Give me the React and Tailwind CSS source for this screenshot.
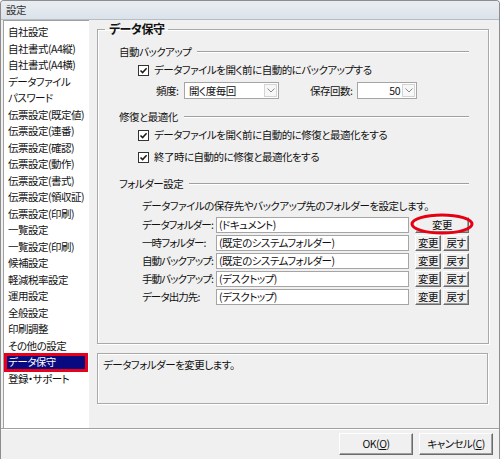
const items = [
  '自社設定',
  '自社書式(A4縦)',
  '自社書式(A4横)',
  'データファイル',
  'パスワード',
  '伝票設定(既定値)',
  '伝票設定(連番)',
  '伝票設定(確認)',
  '伝票設定(動作)',
  '伝票設定(書式)',
  '伝票設定(領収証)',
  '伝票設定(印刷)',
  '一覧設定',
  '一覧設定(印刷)',
  '候補設定',
  '軽減税率設定',
  '運用設定',
  '全般設定',
  '印刷調整',
  'その他の設定',
  'データ保守',
  '登録・サポート',
];

const folders = [
  { label: 'データフォルダー:', value: '(ドキュメント)', wide: true },
  { label: '一時フォルダー:', value: '(既定のシステムフォルダー)' },
  { label: '自動バックアップ:', value: '(既定のシステムフォルダー)' },
  { label: '手動バックアップ:', value: '(デスクトップ)' },
  { label: 'データ出力先:', value: '(デスクトップ)' },
];

function SectionHead({ children }) {
  return (
    <div className="flex items-center h-4 gap-[6px]">
      <span className="whitespace-nowrap">{children}</span>
      <div className="flex-1 border-t border-b border-t-[#a0a0a0] border-b-white" />
    </div>
  );
}

function Check({ children }) {
  return (
    <div className="flex items-center h-4 ml-[19px] gap-[5px] whitespace-nowrap">
      <span className="w-[11px] h-[11px] shrink-0 border border-[#333] bg-white flex items-center justify-center">
        <svg width="9" height="9" viewBox="0 0 9 9">
          <path d="M1.5 4.5 L3.6 6.6 L7.6 2.2" stroke="#1a1a1a" strokeWidth="1.5" fill="none" />
        </svg>
      </span>
      <span>{children}</span>
    </div>
  );
}

function Arrow() {
  return (
    <span className="w-[13px] h-[13px] mr-[1px] shrink-0 border border-[#d4d4d4] bg-[#f7f7f7] flex items-center justify-center">
      <svg width="8" height="5" viewBox="0 0 8 5">
        <path d="M0.5 0.5 L4 4 L7.5 0.5" stroke="#8a8a8a" strokeWidth="1" fill="none" />
      </svg>
    </span>
  );
}

function Btn({ children, className = '' }) {
  return (
    <button
      className={`h-[16px] flex items-center justify-center bg-[#f0f0f0] border border-t-white border-l-white border-r-[#6b6b6b] border-b-[#6b6b6b] shadow-[inset_-1px_-1px_0_#a0a0a0] text-[10.5px] leading-none whitespace-nowrap ${className}`}
    >
      {children}
    </button>
  );
}

export default function App() {
  return (
    <div
      className="w-[500px] h-[459px] bg-[#f0f0f0] border-x border-t border-[#8d8d8d] rounded-t-[4px] flex flex-col overflow-hidden text-[10.5px] tracking-[-0.5px] leading-4 text-[#111] [font-feature-settings:'palt']"
      style={{ fontFamily: '"Noto Sans CJK JP", "Noto Sans", sans-serif' }}
    >
      {/* Title bar */}
      <div className="h-[19px] shrink-0 bg-gradient-to-b from-[#e9eef3] to-[#dbe2e9] border-b border-[#b4bcc4] flex items-center px-[5px] text-[#333]">
        設定
      </div>

      {/* Body */}
      <div className="flex-1 flex pl-[2px] min-h-0">
        {/* Left list */}
        <div className="w-[86px] bg-white border-l border-t border-[#a0a0a0] flex flex-col pt-[3px] pl-[1px]">
          {items.map((it) => {
            const sel = it === 'データ保守';
            return (
              <div key={it} className={`h-[16.5px] flex items-center whitespace-nowrap ${sel ? '' : 'pl-[3px]'}`}>
                {sel ? (
                  <div className="w-[84px] h-[19px] -ml-[1px] border-[3px] border-[#e8001c] flex items-center">
                    <span className="w-full h-[13px] bg-[#0a0a80] text-white flex items-center pl-[1px]">
                      {it}
                    </span>
                  </div>
                ) : (
                  it
                )}
              </div>
            );
          })}
        </div>

        {/* Right column */}
        <div className="w-[391px] ml-[8px] flex flex-col pt-[2px]">
          <fieldset className="h-[322px] border border-[#a9a9a9] shadow-[inset_1px_1px_0_#fff,1px_1px_0_#fff] pl-[21px] pr-[19px]">
            <legend className="-ml-[14px] px-[4px] font-bold text-[12px] leading-[14px]">データ保守</legend>

            <div className="flex flex-col pt-[8px]">
              <SectionHead>自動バックアップ</SectionHead>
              <div className="mt-[2px]">
                <Check>データファイルを開く前に自動的にバックアップする</Check>
              </div>

              <div className="flex items-center mt-[4px] h-[17px] whitespace-nowrap">
                <span className="ml-[37px] w-[28px]">頻度:</span>
                <div className="w-[95px] h-[17px] bg-white border border-[#a5a5a5] flex items-center justify-between pl-[4px]">
                  <span>開く度毎回</span>
                  <Arrow />
                </div>
                <span className="ml-[31px] w-[47px]">保存回数:</span>
                <div className="w-[60px] h-[17px] bg-white border border-[#a5a5a5] flex items-center justify-end gap-[2px]">
                  <span>50</span>
                  <Arrow />
                </div>
              </div>

              <div className="mt-[10px]">
                <SectionHead>修復と最適化</SectionHead>
              </div>
              <div className="mt-[2px]">
                <Check>データファイルを開く前に自動的に修復と最適化をする</Check>
              </div>
              <div className="mt-[6px]">
                <Check>終了時に自動的に修復と最適化をする</Check>
              </div>

              <div className="mt-[11px]">
                <SectionHead>フォルダー設定</SectionHead>
              </div>
              <div className="mt-[6px] ml-[23px] whitespace-nowrap">
                データファイルの保存先やバックアップ先のフォルダーを設定します。
              </div>

              <div className="mt-[2px] ml-[23px] flex flex-col">
                {folders.map((f) => (
                  <div key={f.label} className="h-[18px] flex items-center whitespace-nowrap">
                    <span className="w-[74px] shrink-0 tracking-[-0.9px]">{f.label}</span>
                    <div className="w-[193px] h-[16px] shrink-0 bg-white border border-[#a5a5a5] flex items-center pl-[2px]">
                      {f.value}
                    </div>
                    {f.wide ? (
                      <div className="relative ml-[6px]">
                        <Btn className="w-[54px]">変更</Btn>
                        <svg
                          className="absolute -left-[5px] -top-[4px] pointer-events-none"
                          width="64"
                          height="22"
                          viewBox="0 0 64 22"
                        >
                          <ellipse cx="32" cy="11" rx="30" ry="9" stroke="#e50012" strokeWidth="3" fill="none" />
                        </svg>
                      </div>
                    ) : (
                      <div className="flex ml-[6px] gap-[2px]">
                        <Btn className="w-[26px]">変更</Btn>
                        <Btn className="w-[26px]">戻す</Btn>
                      </div>
                    )}
                  </div>
                ))}
              </div>
            </div>
          </fieldset>

          <div className="mt-[9px] h-[51px] border border-[#a9a9a9] shadow-[inset_1px_1px_0_#fff,1px_1px_0_#fff] px-[5px] pt-[3px]">
            データフォルダーを変更します。
          </div>
        </div>
      </div>

      {/* Footer */}
      <div className="h-[31px] shrink-0 border-t border-[#a0a0a0] shadow-[inset_0_1px_0_#fff] flex items-center justify-end gap-[6px] pr-[6px]">
        <button className="w-[74px] h-[22px] bg-[#f0f0f0] border border-t-white border-l-white border-r-[#6b6b6b] border-b-[#6b6b6b] shadow-[inset_-1px_-1px_0_#a0a0a0] leading-none">
          OK(<span className="underline">O</span>)
        </button>
        <button className="w-[74px] h-[22px] bg-[#f0f0f0] border border-t-white border-l-white border-r-[#6b6b6b] border-b-[#6b6b6b] shadow-[inset_-1px_-1px_0_#a0a0a0] leading-none">
          キャンセル(<span className="underline">C</span>)
        </button>
      </div>
    </div>
  );
}
